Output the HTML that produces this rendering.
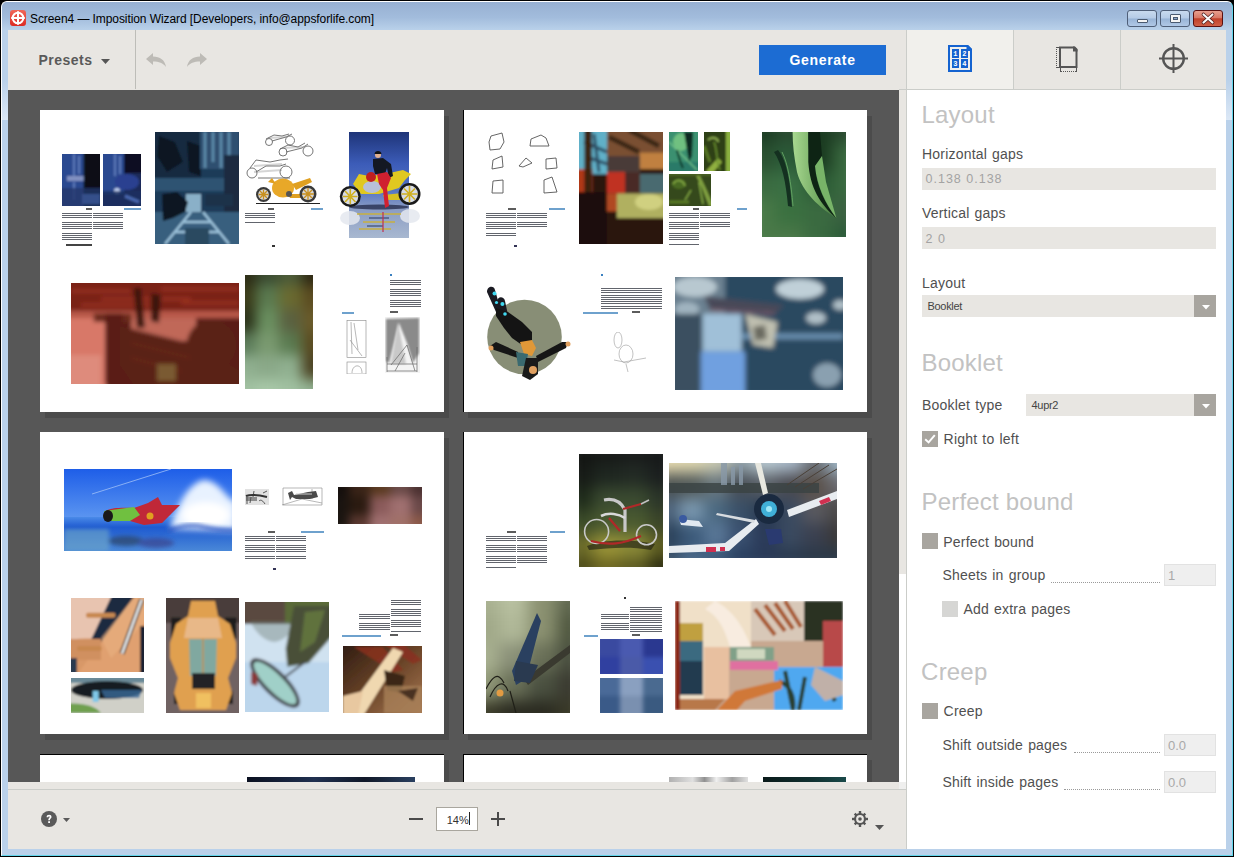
<!DOCTYPE html>
<html><head><meta charset="utf-8">
<style>
*{box-sizing:border-box;margin:0;padding:0}
html,body{width:1234px;height:857px;overflow:hidden;background:#000;font-family:"Liberation Sans",sans-serif}
.a{position:absolute}
#win{position:absolute;left:0;top:0;width:1234px;height:857px;background:#000}
#frame{position:absolute;left:1px;top:1px;width:1232px;height:855px;border-radius:6px 6px 0 0;background:#bad1ea;border-left:1px solid #fff;border-top:1px solid #fff;border-right:1px solid #62d6ec;border-bottom:1px solid #62d6ec}
#titlebar{position:absolute;left:2px;top:2px;width:1230px;height:28px;border-radius:5px 5px 0 0;background:linear-gradient(#97b0d2,#a2bcdc 55%,#b9d1ea)}
#title{left:30px;top:12px;font-size:12px;color:#000;white-space:nowrap;letter-spacing:-0.08px}
.wbtn{position:absolute;top:10px;height:17px;border:1px solid #4f5f78;border-radius:3px;background:linear-gradient(#c8daee,#b5cbe6 48%,#98b4d6 52%,#b0c8e6)}
#client{position:absolute;left:8px;top:30px;width:1218px;height:819px;background:#e8e6e2;overflow:hidden}
.lbl{position:absolute;font-size:14px;color:#505050;white-space:nowrap;letter-spacing:0.2px;word-spacing:1px}
.hd{position:absolute;font-size:24px;color:#c2c2c2;white-space:nowrap;letter-spacing:0.2px;margin:-1.5px 0 0 -1.5px}
.inp{position:absolute;background:#e8e6e2}
.cb{position:absolute;width:16px;height:16px;background:#a8a59f}
.dots{position:absolute;height:1px;border-bottom:1px dotted #9a9a9a}
.sm{position:absolute;width:52px;height:22px;background:#efefef;border:1px solid #e2e2e2;font-size:13px;color:#a9a9a9;padding:3px 0 0 3px}
.pg{position:absolute;width:404px;height:302px;background:#fff;box-shadow:5px 6px 0 #4b4b4b}
.im{position:absolute;overflow:hidden}
.gr{position:absolute;display:grid}
.gr i{display:block}
.tx{position:absolute;opacity:.8;background:repeating-linear-gradient(#3a3e48 0 0.9px,#fff 0.9px 2.2px)}
</style></head><body>
<div id="win">
 <div id="frame"></div>
 <div id="titlebar"></div>
 <div class="a" style="left:2px;top:80px;width:6px;height:40px;background:linear-gradient(#bad1ea,#dce8f6)"></div>
 <div class="a" style="left:1226px;top:80px;width:6px;height:40px;background:linear-gradient(#bad1ea,#dce8f6)"></div>
 <div class="a" style="left:10px;top:10px;width:16px;height:16px;border-radius:3px;background:linear-gradient(#f0685a,#dc2a22)">
  <svg width="16" height="16" viewBox="0 0 16 16" style="position:absolute;left:0;top:0"><circle cx="8" cy="8" r="5.3" fill="none" stroke="#fff" stroke-width="2"/><path d="M8 1.2V14.8M1.2 8H14.8" stroke="#fff" stroke-width="2"/></svg>
 </div>
 <div id="title" class="a">Screen4 — Imposition Wizard [Developers, info@appsforlife.com]</div>
 <div class="wbtn" style="left:1127px;width:30px"><div class="a" style="left:9px;top:8px;width:11px;height:4px;background:#f4f4f4;border:1px solid #4a5a70;border-radius:1px"></div></div>
 <div class="wbtn" style="left:1160px;width:30px"><div class="a" style="left:9px;top:3px;width:11px;height:9px;background:#f4f4f4;border:1px solid #4a5a70;border-radius:1px"><div class="a" style="left:2px;top:2px;width:5px;height:3px;background:#8aa6c8;border:1px solid #4a5a70"></div></div></div>
 <div class="wbtn" style="left:1193px;width:30px;border-color:#5a1010;background:linear-gradient(#e8a090,#d87866 45%,#c0402a 52%,#d06048)">
  <svg width="30" height="17" style="position:absolute;left:-1px;top:-1px"><path d="M10.5 4.5L19.5 12.5M19.5 4.5L10.5 12.5" stroke="#4a1a1a" stroke-width="3.6" stroke-linecap="round"/><path d="M10.5 4.5L19.5 12.5M19.5 4.5L10.5 12.5" stroke="#fafafa" stroke-width="2.2" stroke-linecap="round"/></svg>
 </div>

 <div id="client">
  <!-- toolbar -->
  <div class="a" style="left:0;top:0;width:898px;height:60px;background:#e8e6e2"></div>
  <div class="a" style="left:30.4px;top:21.5px;font-size:14px;font-weight:bold;color:#5a5a5a;letter-spacing:0.5px">Presets</div>
  <svg class="a" style="left:93px;top:29px" width="9" height="5"><path d="M0 0H9L4.5 5Z" fill="#555"/></svg>
  <div class="a" style="left:127px;top:0;width:1px;height:59px;background:#bdbdb8"></div>
  <svg class="a" style="left:138px;top:23px" width="21" height="15" viewBox="0 0 21 15"><path d="M0 6L7 0V3.5C14 3.5 19 7 20 14C17 10 13 8.5 7 8.5V12Z" fill="#bdbbb6"/></svg>
  <svg class="a" style="left:178px;top:23px" width="21" height="15" viewBox="0 0 21 15"><path d="M21 6L14 0V3.5C7 3.5 2 7 1 14C4 10 8 8.5 14 8.5V12Z" fill="#bdbbb6"/></svg>
  <div class="a" style="left:751px;top:15px;width:127px;height:30px;background:#1c6cd3"></div>
  <div class="a" style="left:781.4px;top:22.4px;font-size:14px;font-weight:bold;color:#fff;letter-spacing:0.7px">Generate</div>

  <!-- canvas -->
  <div id="canvas" class="a" style="left:0;top:60px;width:891px;height:692px;background:#575757;overflow:hidden">
<div class="pg" style="left:32px;top:20px"></div>
<div class="pg" style="left:455px;top:20px"></div>
<div class="a" style="left:455px;top:20px;width:1px;height:302px;background:#000"></div>
<div class="pg" style="left:32px;top:342px"></div>
<div class="pg" style="left:455px;top:342px"></div>
<div class="a" style="left:455px;top:342px;width:1px;height:302px;background:#000"></div>
<div class="pg" style="left:32px;top:664px"></div>
<div class="a" style="left:32px;top:664px;width:404px;height:1px;background:#000"></div>
<div class="pg" style="left:455px;top:664px"></div>
<div class="a" style="left:455px;top:664px;width:1px;height:302px;background:#000"></div>
<div class="a" style="left:455px;top:664px;width:404px;height:1px;background:#000"></div>
<svg class="a" style="left:54px;top:64px" width="38" height="52" viewBox="0 0 38 52"><defs><filter id="f14" x="-20%" y="-20%" width="140%" height="140%"><feGaussianBlur stdDeviation="0.9"/></filter></defs><g filter="url(#f14)"><rect x="-3" y="-3" width="44" height="58" fill="#080c18"/>
<path d="M-3 -3H21.6V55H-3Z" fill="#2a4a90"/><path d="M12 0V22M17 2V20M12 28V46" stroke="#5a78b8" stroke-width="2"/>
<path d="M5 22H21.6V27H5Z" fill="#8090c0"/><path d="M-3 34H40V55H-3Z" fill="#24366a" opacity=".8"/><path d="M20 40H38V50H20Z" fill="#34508a"/></g></svg>
<svg class="a" style="left:95px;top:64px" width="38" height="52" viewBox="0 0 38 52"><defs><filter id="f15" x="-20%" y="-20%" width="140%" height="140%"><feGaussianBlur stdDeviation="0.9"/></filter></defs><g filter="url(#f15)"><rect x="-3" y="-3" width="44" height="58" fill="#1a2a58"/>
<path d="M-3 -3H21V40H-3Z" fill="#2a4a90"/><path d="M12 0V22M17 2V20" stroke="#5a78b8" stroke-width="2"/><path d="M21 -3H41V19H21Z" fill="#0a1020"/>
<ellipse cx="24" cy="28" rx="12" ry="8" fill="#2a4090"/><circle cx="14" cy="37" r="3" fill="#c0d0f0"/><path d="M-3 37H41V55H-3Z" fill="#1a3060" opacity=".8"/><path d="M22 42L36 48" stroke="#4a68b0" stroke-width="3"/></g></svg>
<svg class="a" style="left:147px;top:42px" width="84" height="112" viewBox="0 0 84 112"><defs><filter id="f13" x="-20%" y="-20%" width="140%" height="140%"><feGaussianBlur stdDeviation="1.3"/></filter></defs><g filter="url(#f13)"><rect x="-4" y="-4" width="92" height="120" fill="#1e3a58"/>
<path d="M-4 -4H46V59H-4Z" fill="#162a40"/><path d="M4 4L20 10L28 30L12 40L2 24Z" fill="#0c1824"/><path d="M32 9L46 14L46 44L34 40Z" fill="#0a1420"/>
<path d="M45 -4H84V37H45Z" fill="#2e5070"/><path d="M50 0V36M58 0V30M66 0V36M74 0V30" stroke="#5a88a8" stroke-width="3"/>
<path d="M-4 46H88V59H-4Z" fill="#2e5272"/><path d="M69 23H88V80H69Z" fill="#1a2a40"/>
<path d="M-4 80H88V116H-4Z" fill="#385e7e"/><path d="M10 112L36 80M74 112L48 80M20 100H64M28 90H56" stroke="#9ac0d8" stroke-width="2.5"/><path d="M30 96H54V116H30Z" fill="#2a4a60"/>
<path d="M31 62H46V80H31Z" fill="#8ab0c8"/><path d="M7 62L22 60L33 70L30 80L18 86L8 89Z" fill="#0a1420"/><path d="M50 62H78V74H50Z" fill="#1a3048"/></g></svg>
<div class="tx" style="left:54px;top:123px;width:30px;height:30px"></div>
<div class="a" style="left:58px;top:154px;width:26px;height:2px;background:#444"></div>
<div class="tx" style="left:85px;top:123px;width:30px;height:19px"></div>
<div class="a" style="left:78px;top:118px;width:6px;height:2px;background:#333;opacity:.8"></div>
<div class="a" style="left:116px;top:118px;width:17px;height:2px;background:#4a8ac0;opacity:.8"></div>
<svg class="a" style="left:234px;top:38px" width="84" height="82" viewBox="0 0 84 82"><g fill="none" stroke="#666" stroke-width="0.9">
<circle cx="27" cy="14" r="3.5"/><circle cx="48" cy="12.5" r="4.5"/><path d="M24 11L32 7L40 8L47 6M30 13L44 9L50 6"/>
<circle cx="41" cy="24" r="4"/><circle cx="66" cy="23" r="5"/><path d="M38 21L46 17L56 19L63 15M44 24L60 20L66 16"/>
<circle cx="10" cy="45" r="5"/><circle cx="44" cy="44" r="6"/><path d="M8 40L14 32L28 34L38 32L46 31M14 44L24 38L38 38L44 36M16 50H48"/></g>
<g stroke="#888" stroke-width="2" opacity=".35" fill="none"><path d="M26 10L44 9M40 20L62 19M12 38L40 36M12 44L40 42"/></g>
<path d="M14 75.5H78" stroke="#222" stroke-width="1.2"/>
<ellipse cx="41" cy="60" rx="11" ry="9.5" fill="#e8a828"/><path d="M50 56L68 50L70 54L54 62Z" fill="#e0a020"/><path d="M46 66L62 66L60 70L48 70Z" fill="#e0a020"/><path d="M26 54L30 50L34 56Z" fill="#e0a020"/>
<circle cx="21.5" cy="66.5" r="7.5" fill="#3a3a3a"/><circle cx="21.5" cy="66.5" r="5.3" fill="#d8d8d8"/><path d="M21.5 61.5V71.5M16.5 66.5H26.5M18 63L25 70M25 63L18 70" stroke="#c89020" stroke-width="1.3"/>
<circle cx="66" cy="66" r="8.5" fill="#3a3a3a"/><circle cx="66" cy="66" r="6" fill="#d8d8d8"/><path d="M66 60V72M60 66H72M62 62L70 70M70 62L62 70" stroke="#c89020" stroke-width="1.3"/>
<circle cx="47" cy="66" r="3" fill="#555"/></svg>
<div class="tx" style="left:237px;top:123px;width:30px;height:10px"></div>
<div class="a" style="left:303px;top:118px;width:12px;height:2px;background:#4a8ac0;opacity:.8"></div>
<div class="a" style="left:260px;top:118px;width:6px;height:2px;background:#333;opacity:.8"></div>
<div class="a" style="left:264px;top:155px;width:3px;height:2px;background:#333"></div>
<svg class="a" style="left:331px;top:42px" width="84" height="106" viewBox="0 0 84 106"><defs><linearGradient id="wb" x1="0" y1="0" x2="0" y2="1"><stop offset="0" stop-color="#1e3478"/><stop offset=".3" stop-color="#3c5cb8"/><stop offset=".55" stop-color="#5474c4"/><stop offset=".72" stop-color="#8a9cc4"/><stop offset="1" stop-color="#a8b8d0"/></linearGradient></defs>
<rect x="10" y="0" width="60" height="106" fill="url(#wb)"/>
<ellipse cx="11" cy="86" rx="10" ry="7" fill="#e4e8ee" opacity=".85"/><ellipse cx="71" cy="84" rx="10" ry="7" fill="#e4e8ee" opacity=".85"/>
<path d="M18 82H62M24 90H56M20 97H52" stroke="#c8b040" stroke-width="2" opacity=".75"/><path d="M30 86H50M28 94H44" stroke="#3a4a70" stroke-width="2" opacity=".6"/><path d="M44 80V100" stroke="#c03050" stroke-width="2" opacity=".6"/>
<ellipse cx="40" cy="75" rx="30" ry="2.5" fill="#1a2040" opacity=".7"/>
<path d="M14 52L20 42L30 44L46 42L64 38L72 42L66 48L60 56L40 62L22 62Z" fill="#e0c820"/>
<ellipse cx="33" cy="55" rx="9" ry="6" fill="#b8c0d8"/><path d="M44 63L64 61L62 68L46 68Z" fill="#d8c020"/>
<circle cx="11.3" cy="64.5" r="10.5" fill="#1a1a1a"/><circle cx="11.3" cy="64.5" r="8" fill="#d8dce4"/><path d="M11.3 57V72M4 64.5H18.5M6 59L16.5 70M16.5 59L6 70" stroke="#d0b020" stroke-width="1.6"/>
<circle cx="70.5" cy="62" r="11" fill="#1a1a1a"/><circle cx="70.5" cy="62" r="8.4" fill="#d8dce4"/><path d="M70.5 54V70M62.5 62H78.5M65 56.5L76 67.5M76 56.5L65 67.5" stroke="#d0b020" stroke-width="1.6"/>
<path d="M34 27L44 26L52 32L54 44L50 46L48 36L46 42L36 42L34 34Z" fill="#141822"/><circle cx="39" cy="23" r="3" fill="#e0b090"/><path d="M35.5 22C35.5 18 42.5 18 42.5 22Z" fill="#111"/>
<path d="M38 42L48 40L52 46L48 56L50 74L46 76L44 58L40 52Z" fill="#d02030"/><circle cx="32" cy="45" r="5" fill="#c02020"/></svg>
<svg class="a" style="left:63px;top:193px" width="168" height="101" viewBox="0 0 168 101"><defs><filter id="f11" x="-20%" y="-20%" width="140%" height="140%"><feGaussianBlur stdDeviation="2"/></filter></defs><g filter="url(#f11)">
<rect x="-5" y="-5" width="178" height="111" fill="#5a1c14"/>
<rect x="-5" y="-5" width="178" height="33" fill="#7a2418"/><path d="M0 8H60M30 16H120M90 6H168M10 22H80M110 20H168" stroke="#a83a28" stroke-width="3" opacity=".7"/>
<rect x="-5" y="28" width="178" height="7" fill="#b85848"/><path d="M60 35H125V58H60Z" fill="#c06858"/>
<path d="M-5 35H35V106H-5Z" fill="#d87868"/><path d="M-5 72H30V106H-5Z" fill="#e09080" opacity=".8"/>
<path d="M22.7 30.5H60.6V39H22.7Z" fill="#6a2a1c"/><path d="M34 30.5H52V100H34Z" fill="#5a1a14"/>
<path d="M62.7 5L70 5L74 45L66 45ZM80 10L90 12L88 40L80 38Z" fill="#3a1410"/>
<path d="M49 43L126 62L168 87L168 106L65 106L49 83Z" fill="#5a2018"/><path d="M60 60L120 75M60 75L110 88" stroke="#6a2a1c" stroke-width="2"/>
<circle cx="140.7" cy="62" r="25" fill="#5a2014"/><path d="M86 81H105V98H86Z" fill="#7a5a30"/></g></svg>
<div class="im" style="left:237px;top:185px;width:68px;height:114px"><div class="gr" style="left:-12.92px;top:-12.92px;right:-12.92px;bottom:-12.92px;grid-template-columns:repeat(4,1fr);grid-template-rows:repeat(6,1fr);filter:blur(6.5px)"><i style="background:#2a2a14"></i><i style="background:#3a4a30"></i><i style="background:#4a5a38"></i><i style="background:#2a2410"></i><i style="background:#3a3a18"></i><i style="background:#5a7a50"></i><i style="background:#6a6a30"></i><i style="background:#5a4a20"></i><i style="background:#2a3018"></i><i style="background:#6a9060"></i><i style="background:#5a6040"></i><i style="background:#6a5a28"></i><i style="background:#5a7a58"></i><i style="background:#7a9a70"></i><i style="background:#5a7a50"></i><i style="background:#5a4a20"></i><i style="background:#90b090"></i><i style="background:#8aa888"></i><i style="background:#90b090"></i><i style="background:#4a4020"></i><i style="background:#a0c0a0"></i><i style="background:#a8c8a8"></i><i style="background:#a0c0a0"></i><i style="background:#90b090"></i></div></div>
<div class="a" style="left:382px;top:184px;width:2px;height:2px;background:#3a80c0"></div>
<div class="tx" style="left:382px;top:190px;width:31px;height:29px"></div>
<div class="a" style="left:334px;top:222px;width:12px;height:2px;background:#4a8ac0;opacity:.8"></div>
<div class="a" style="left:382px;top:221px;width:8px;height:2px;background:#333;opacity:.8"></div>
<svg class="a" style="left:338px;top:230px" width="21" height="54" viewBox="0 0 21 54"><g fill="none" stroke="#888" stroke-width="0.6"><rect x="1" y="0.5" width="19" height="37"/><path d="M5 2L6 34M8 3L12 30M4 20L16 36"/><rect x="1" y="42" width="19" height="12"/><path d="M6 53C6 44 16 43 16 53"/></g></svg>
<svg class="a" style="left:377px;top:227px" width="35" height="56" viewBox="0 0 35 56"><defs><filter id="f12" x="-20%" y="-20%" width="140%" height="140%"><feGaussianBlur stdDeviation="1.3"/></filter></defs><rect width="35" height="56" fill="#f4f4f4"/>
<path d="M1 2L34 1L34 36L28 46L22 26L14 6L8 30L4 46L1 44Z" fill="#8a8a8a" filter="url(#f12)"/><path d="M13 5L6 47H21Z" fill="#c8c8c8" filter="url(#f12)"/>
<g stroke="#666" stroke-width=".7" fill="none"><path d="M2 54H32M2 40V55M32 30V55M6 48L22 28L30 54M10 54L20 36M2 47H32"/></g></svg>
<svg class="a" style="left:478px;top:42px" width="80" height="73" viewBox="0 0 80 73"><g fill="none" stroke="#555" stroke-width="0.9">
<path d="M5 4L16 1L18 10L14 17L4 18L3 10Z"/><path d="M45 7L55 3L60 6L63 14H44Z"/><path d="M7 28L16 24L17 35L6 37Z"/>
<path d="M33 34L40 26L46 31L37 35Z"/><path d="M60 27L70 26L71 36L60 37Z"/><path d="M7 49L17 48L17 61L6 61Z"/><path d="M58 48L66 45L71 60L58 61Z"/></g></svg>
<div class="tx" style="left:478px;top:123px;width:30px;height:23px"></div>
<div class="tx" style="left:509px;top:123px;width:30px;height:14px"></div>
<div class="a" style="left:500px;top:118px;width:8px;height:2px;background:#333;opacity:.8"></div>
<div class="a" style="left:541px;top:118px;width:16px;height:2px;background:#4a8ac0;opacity:.8"></div>
<div class="a" style="left:506px;top:155px;width:3px;height:2px;background:#335"></div>
<svg class="a" style="left:571px;top:42px" width="84" height="112" viewBox="0 0 84 112"><defs><filter id="f21" x="-20%" y="-20%" width="140%" height="140%"><feGaussianBlur stdDeviation="1.8"/></filter></defs><g filter="url(#f21)"><rect x="-5" y="-5" width="94" height="122" fill="#2a1810"/><rect x="-5" y="-5" width="34" height="47" fill="#60b0c8"/><path d="M5 10L28 20M8 25L28 32M15 2L20 40" stroke="#2a4a60" stroke-width="3"/><path d="M28 -5H89V24H28Z" fill="#7a5030"/><path d="M30 5L60 20M50 -2L80 14" stroke="#3a2818" stroke-width="5"/><path d="M61 20.7H89V37H61Z" fill="#c08040"/><path d="M28 24H61V40H28Z" fill="#4a3a38"/><rect x="-5" y="37" width="18.5" height="23" fill="#b03818"/><rect x="28" y="40" width="18" height="21.5" fill="#c03020"/><rect x="46" y="40" width="15" height="21.5" fill="#4a2a28"/><rect x="61" y="42" width="28" height="19.5" fill="#4a6a70"/><rect x="5.4" y="-5" width="7.3" height="65" fill="#3a2010"/><path d="M38 61.5H89V86H38Z" fill="#b0b060"/><ellipse cx="70" cy="70" rx="14" ry="8" fill="#d0d080"/><path d="M13.5 61.5H38V79.5H13.5Z" fill="#b04a20"/><path d="M-5 60H28V117H-5Z" fill="#1a1008"/><path d="M28 86H89V117H28Z" fill="#2a1810"/></g></svg>
<svg class="a" style="left:661px;top:42px" width="29" height="39" viewBox="0 0 29 39"><defs><filter id="f23" x="-20%" y="-20%" width="140%" height="140%"><feGaussianBlur stdDeviation="0.9"/></filter></defs><g filter="url(#f23)"><rect x="-3" y="-3" width="35" height="45" fill="#3a9070"/><ellipse cx="12" cy="10" rx="8" ry="9" fill="#70c080"/><rect x="-3" y="30" width="35" height="12" fill="#2a7a68"/>
<path d="M0 10L28 38" stroke="#70c088" stroke-width="1.5"/><path d="M8 18C10 26 12 32 14 36" stroke="#0a3020" stroke-width="1.8" fill="none"/>
<path d="M15 0L24 0L23 24L20 30Z" fill="#0a2a20"/></g></svg>
<svg class="a" style="left:696px;top:42px" width="26" height="39" viewBox="0 0 26 39"><defs><filter id="f24" x="-20%" y="-20%" width="140%" height="140%"><feGaussianBlur stdDeviation="0.8"/></filter></defs><g filter="url(#f24)"><rect x="-3" y="-3" width="32" height="45" fill="#2e4012"/>
<rect x="22" y="-3" width="6" height="45" fill="#8ab040"/><path d="M2 39L14 26L18 30L8 42Z" fill="#90b040"/><path d="M4 8C8 4 14 6 14 10" stroke="#8aaa50" stroke-width="2" fill="none"/>
<path d="M10 10C14 20 12 30 16 38" stroke="#6a9030" stroke-width="1.5" fill="none"/><path d="M0 14L6 30" stroke="#5a7a28" stroke-width="3"/></g></svg>
<svg class="a" style="left:661px;top:84px" width="42" height="32" viewBox="0 0 42 32"><defs><filter id="f25" x="-20%" y="-20%" width="140%" height="140%"><feGaussianBlur stdDeviation="0.8"/></filter></defs><g filter="url(#f25)"><rect x="-3" y="-3" width="48" height="38" fill="#34481a"/>
<path d="M26 0C32 10 36 22 40 32L44 32C40 20 34 8 30 0Z" fill="#80a040"/><ellipse cx="10" cy="10" rx="7" ry="5" fill="#4a6a20"/><path d="M4 10C8 4 14 6 16 12M16 26L22 16M30 8L34 30" stroke="#8ab048" stroke-width="1.4" fill="none"/>
<rect x="-3" y="-3" width="48" height="5" fill="#4a6020"/><path d="M0 28H20" stroke="#5a7a28" stroke-width="3"/></g></svg>
<div class="tx" style="left:661px;top:123px;width:30px;height:32px"></div>
<div class="tx" style="left:692px;top:123px;width:30px;height:15px"></div>
<div class="a" style="left:729px;top:118px;width:10px;height:2px;background:#4a8ac0;opacity:.8"></div>
<div class="a" style="left:685px;top:118px;width:6px;height:2px;background:#333;opacity:.8"></div>
<div class="im" style="left:754px;top:42px;width:84px;height:105px"><div class="gr" style="left:-15.96px;top:-15.96px;right:-15.96px;bottom:-15.96px;grid-template-columns:repeat(4,1fr);grid-template-rows:repeat(5,1fr);filter:blur(8.0px)"><i style="background:#1a3a22"></i><i style="background:#2a4a30"></i><i style="background:#1a3a20"></i><i style="background:#2a4a30"></i><i style="background:#2a5030"></i><i style="background:#2a5a38"></i><i style="background:#1a3a20"></i><i style="background:#3a6a40"></i><i style="background:#3a6a40"></i><i style="background:#3a7044"></i><i style="background:#2a5a34"></i><i style="background:#3a6a40"></i><i style="background:#4a7a48"></i><i style="background:#3a7040"></i><i style="background:#3a6a40"></i><i style="background:#3a6040"></i><i style="background:#4a7a48"></i><i style="background:#4a7848"></i><i style="background:#3a6a40"></i><i style="background:#2a5a38"></i></div></div>
<svg class="a" style="left:754px;top:42px" width="84" height="105" viewBox="0 0 84 105"><defs><linearGradient id="hg" x1="0" y1="0" x2="1" y2="0"><stop offset="0" stop-color="#a8d890"/><stop offset=".6" stop-color="#70a860"/><stop offset="1" stop-color="#3a6a38"/></linearGradient></defs>
<path d="M30.6 0L46.3 0C46 30 52 55 74.4 86.2C58 76 40 60 35 40C32 25 30.6 12 30.6 0Z" fill="url(#hg)"/>
<path d="M46.3 0L58 0L60 24L53 34C54 52 62 70 74.4 86.2C58 72 48 56 46.3 30Z" fill="#0e2414"/>
<path d="M53 34L60 24L64 50L74.4 86.2C64 72 55 55 53 34Z" fill="#78b468"/>
<path d="M16 18C24 28 28 45 30 75L26 74C24 50 20 32 12 20Z" fill="#143020"/><path d="M20 20C26 32 29 50 31 74" stroke="#60a060" stroke-width="1" fill="none"/></svg>
<svg class="a" style="left:474px;top:192px" width="94" height="104" viewBox="0 0 94 104"><circle cx="42.5" cy="55" r="37.3" fill="#888e76"/>
<path d="M5 10C5 4 12 3 13 8L17 22L20 27L14 30Z" fill="#1a1a22"/><path d="M15 20C15 14 22 14 23 19L26 33L20 36Z" fill="#1a1a22"/>
<path d="M14 26L26 30L40 40L50 50L50 60L40 63L30 56L22 46L14 34Z" fill="#141414"/>
<path d="M38 60L50 58L54 66L50 74L42 72Z" fill="#e09838"/>
<path d="M8 64L14 60L36 70L36 76L12 68Z" fill="#161616"/><path d="M54 74L80 60L86 60L84 66L56 80Z" fill="#161616"/>
<circle cx="9" cy="66" r="2.5" fill="#e0a060"/><circle cx="86" cy="62" r="2.5" fill="#e0a060"/>
<path d="M34 70L46 72L44 84L36 84Z" fill="#3a6a70"/>
<path d="M44 76L56 76L56 92L48 98L40 94Z" fill="#1a1a1a"/><circle cx="51" cy="88" r="4" fill="#e0a060"/>
<circle cx="12.5" cy="11.5" r="2" fill="#40d8f0"/><circle cx="20.4" cy="22" r="2" fill="#40d8f0"/><circle cx="23" cy="32" r="1.8" fill="#40d8f0"/><circle cx="14.5" cy="20.5" r="1.6" fill="#40d8f0"/></svg>
<div class="a" style="left:593px;top:184px;width:2px;height:2px;background:#3a80c0"></div>
<div class="tx" style="left:593px;top:198px;width:61px;height:21px"></div>
<div class="a" style="left:575px;top:222px;width:35px;height:2px;background:#4a8ac0;opacity:.8"></div>
<div class="a" style="left:624px;top:221px;width:8px;height:2px;background:#333;opacity:.8"></div>
<svg class="a" style="left:602px;top:242px" width="38" height="42" viewBox="0 0 38 42"><g fill="none" stroke="#999" stroke-width="0.6"><ellipse cx="8" cy="8" rx="4" ry="8"/><ellipse cx="16" cy="22" rx="7" ry="9"/><path d="M4 28L14 30L36 26M16 32L18 40"/></g></svg>
<svg class="a" style="left:667px;top:187px" width="168" height="113" viewBox="0 0 168 113"><defs><filter id="f22" x="-20%" y="-20%" width="140%" height="140%"><feGaussianBlur stdDeviation="2.5"/></filter></defs><g filter="url(#f22)"><rect x="-5" y="-5" width="178" height="123" fill="#2a4860"/><path d="M-5 -5H50V40H-5Z" fill="#6a8090"/><ellipse cx="20" cy="10" rx="22" ry="10" fill="#b8c8d0"/><ellipse cx="12" cy="32" rx="12" ry="7" fill="#a0b4c0"/><ellipse cx="125" cy="12" rx="24" ry="10" fill="#c0d0d8"/><ellipse cx="141" cy="41" rx="10" ry="6" fill="#b0c0c8"/><ellipse cx="165" cy="28" rx="7" ry="5" fill="#b0c0c8"/><path d="M-5 37H27.5V118H-5Z" fill="#3a5060"/><path d="M27.5 37H66.7V74.5H27.5Z" fill="#a0c0d8"/><path d="M26 74.5H70V118H26Z" fill="#70a0e0"/><path d="M66.7 56.5H168V62H66.7Z" fill="#6a90b0"/><path d="M29 19L109 28L100 37L35 33Z" fill="#4a4a58"/><path d="M35 33L100 37" stroke="#b07080" stroke-width="1"/><path d="M70 37L102.6 45L98 71L78 68Z" fill="#c0c0b0"/><path d="M78 50L90 48L92 62L80 64Z" fill="#6a6a60"/><ellipse cx="152" cy="98" rx="14" ry="12" fill="#8aa0b0"/></g></svg>
<svg class="a" style="left:56px;top:379px" width="168" height="82" viewBox="0 0 168 82"><defs><linearGradient id="sk" x1="0" y1="0" x2="0" y2="1"><stop offset="0" stop-color="#1e5ee8"/><stop offset="1" stop-color="#5a94f0"/></linearGradient><linearGradient id="wt" x1="0" y1="0" x2="0" y2="1"><stop offset="0" stop-color="#4a8ae8"/><stop offset=".3" stop-color="#1e5ad0"/><stop offset="1" stop-color="#4a88d8"/></linearGradient><filter id="bl1" x="-50%" y="-50%" width="200%" height="200%"><feGaussianBlur stdDeviation="3"/></filter><filter id="bl2" x="-50%" y="-50%" width="200%" height="200%"><feGaussianBlur stdDeviation="2"/></filter></defs>
<rect width="168" height="48" fill="url(#sk)"/><rect y="48" width="168" height="34" fill="url(#wt)"/>
<path d="M28 25L107 0" stroke="#a0c0f8" stroke-width="0.8"/>
<g filter="url(#bl1)"><path d="M106 60C112 40 122 18 136 12C146 8 156 18 164 28L172 34V62Z" fill="#e8f2ff"/><ellipse cx="142" cy="46" rx="24" ry="13" fill="#fff"/></g>
<path d="M104 62C116 57 128 55 140 58C150 60 160 62 170 61" stroke="#2050c0" stroke-width="3" fill="none" filter="url(#bl2)"/>
<g filter="url(#bl2)" opacity=".6"><rect x="0" y="60" width="45" height="22" fill="#70a8c8"/><ellipse cx="62" cy="72" rx="18" ry="5" fill="#2a3a50"/><ellipse cx="92" cy="74" rx="18" ry="5" fill="#3a3a80"/></g>
<path d="M40 44C42 40 50 38 70 39L84 34L94 28L98 36L116 36L108 44L98 54L80 56L66 52L44 52Z" fill="#c02838"/>
<path d="M40 42L70 38L76 46L66 52L44 52Z" fill="#70c040"/><ellipse cx="44" cy="47" rx="5" ry="6" fill="#1a1a1a"/><circle cx="86" cy="47" r="3.5" fill="#e0a020"/></svg>
<svg class="a" style="left:237px;top:399px" width="24" height="16" viewBox="0 0 24 16"><rect width="24" height="16" fill="#e2e2e2"/><g stroke="#333" fill="none"><path d="M1 7C6 5 14 6 22 8" stroke-width="2"/><path d="M2 8V15M6 8L5 14M9 2L8 8M14 12C16 10 18 12 20 15M18 4L22 2" stroke-width=".8"/></g><path d="M1 8H12V12H1Z" fill="#555" opacity=".6"/></svg>
<svg class="a" style="left:274px;top:397px" width="41" height="19" viewBox="0 0 41 19"><g stroke="#888" fill="none" stroke-width=".6"><path d="M1 1H40V18H1ZM0 18L20 12L40 16M30 2V12"/></g><path d="M6 6L10 4L12 8L26 5L34 4L36 10L28 12L14 12L10 10L8 13Z" fill="#4a4a4a"/><path d="M14 7H30" stroke="#ccc" stroke-width="1"/></svg>
<div class="im" style="left:330px;top:397px;width:84px;height:37px"><div class="gr" style="left:-9.373333333333333px;top:-9.373333333333333px;right:-9.373333333333333px;bottom:-9.373333333333333px;grid-template-columns:repeat(5,1fr);grid-template-rows:repeat(3,1fr);filter:blur(4.7px)"><i style="background:#140e0c"></i><i style="background:#3a2418"></i><i style="background:#5a3a20"></i><i style="background:#6a4a48"></i><i style="background:#4a3030"></i><i style="background:#1a1410"></i><i style="background:#2a1a10"></i><i style="background:#8a5a5a"></i><i style="background:#a07070"></i><i style="background:#6a4848"></i><i style="background:#1a1410"></i><i style="background:#5a3830"></i><i style="background:#a07070"></i><i style="background:#a07068"></i><i style="background:#8a5848"></i></div></div>
<div class="tx" style="left:237px;top:446px;width:30px;height:24px"></div>
<div class="tx" style="left:268px;top:446px;width:30px;height:23px"></div>
<div class="a" style="left:293px;top:441px;width:23px;height:2px;background:#4a8ac0;opacity:.8"></div>
<div class="a" style="left:260px;top:441px;width:7px;height:2px;background:#333;opacity:.8"></div>
<div class="a" style="left:265px;top:478px;width:3px;height:2px;background:#335"></div>
<svg class="a" style="left:63px;top:508px" width="73" height="74" viewBox="0 0 73 74"><defs><filter id="f31" x="-20%" y="-20%" width="140%" height="140%"><feGaussianBlur stdDeviation="0.8"/></filter></defs><g filter="url(#f31)"><rect x="-5" y="-5" width="83" height="84" fill="#d89868"/><path d="M-5 -5H43V42C30 40 10 40 -5 42Z" fill="#e8c4b0"/><path d="M42 -5H70L31.5 46L20 42Z" fill="#1e2a40"/><path d="M5 78L66 -5H78V78Z" fill="#e0a070"/><path d="M30 40L66 -5H78V20L40 60Z" fill="#e8b080" opacity=".6"/><path d="M-5 41H30V62H-5Z" fill="#d09060"/><path d="M-5 60H6V78H-5Z" fill="#2a3a50"/><path d="M69 28H78V78H69Z" fill="#1a2030"/><path d="M70.7 1.7L51 55.6" stroke="#303030" stroke-width="5"/><path d="M70.7 1.7L51 55.6" stroke="#f4f4f4" stroke-width="2.4"/><rect x="15" y="14.8" width="29.5" height="5" rx="2" fill="#c88850"/><rect x="6" y="48" width="24.7" height="5" rx="2" fill="#c88850"/></g></svg>
<svg class="a" style="left:63px;top:588px" width="73" height="35" viewBox="0 0 73 35"><defs><filter id="f32" x="-20%" y="-20%" width="140%" height="140%"><feGaussianBlur stdDeviation="0.8"/></filter></defs><g filter="url(#f32)"><rect x="-5" y="-5" width="83" height="45" fill="#d0d0c8"/><rect x="-5" y="-5" width="83" height="10" fill="#6a8a98"/><ellipse cx="36" cy="12" rx="36" ry="9" fill="#151a20"/><path d="M30 12H71L68 20H34Z" fill="#3a6a98" opacity=".8"/><path d="M-5 26C10 24 25 28 30 35H-5Z" fill="#70a050"/><rect x="21.7" y="13" width="6" height="11" fill="#80c8e8"/></g></svg>
<svg class="a" style="left:158px;top:508px" width="73" height="115" viewBox="0 0 73 115"><defs><filter id="f33" x="-20%" y="-20%" width="140%" height="140%"><feGaussianBlur stdDeviation="0.8"/></filter></defs><g filter="url(#f33)"><rect x="-5" y="-5" width="83" height="125" fill="#706262"/><rect x="-5" y="-5" width="83" height="30" fill="#4a3c3a"/><rect x="5" y="19.7" width="10" height="21" fill="#1a1a1a"/><rect x="59" y="19.7" width="11.5" height="21" fill="#1a1a1a"/><rect x="8" y="93" width="12" height="13" fill="#1a1a1a"/><rect x="56" y="93" width="11" height="13" fill="#1a1a1a"/><path d="M25 3L49 3L52 18L64 26L70 45L70 60L62 80L66 95L60 112L14 112L8 95L12 80L4 60L4 45L10 26L22 18Z" fill="#e0a050"/><path d="M22 20L52 20L56 40L18 40Z" fill="#e8b888"/><path d="M23 41L51 41L50 78L24 78Z" fill="#80a8a0"/><path d="M37 41V78" stroke="#c09050" stroke-width="1.5"/><path d="M26 75L49 75L49 91L26 91Z" fill="#202028"/><path d="M30 95H45V110H30Z" fill="#f0c060"/></g></svg>
<svg class="a" style="left:237px;top:512px" width="84" height="110" viewBox="0 0 84 110"><defs><filter id="f34" x="-20%" y="-20%" width="140%" height="140%"><feGaussianBlur stdDeviation="1.4"/></filter></defs><g filter="url(#f34)"><rect x="-5" y="-5" width="94" height="120" fill="#d0e2f0"/><rect x="-5" y="60" width="94" height="55" fill="#bcd6ec"/><rect x="-5" y="-5" width="94" height="27" fill="#5a4a40"/><path d="M40 -5H89V22H40Z" fill="#5a6a38"/><path d="M5 19C10 30 20 40 30 40C40 38 48 30 50 19Z" fill="#6a7a70" opacity=".4"/><path d="M49 4L89 4L89 32L63.6 61L42.4 64.7L40.7 46.7Z" fill="#4a5038"/><path d="M60 10L80 8L70 40L55 50Z" fill="#6a8040" opacity=".7"/><path d="M40.7 74.5L60 60" stroke="#3a3a40" stroke-width="2"/><ellipse cx="30" cy="81" rx="33" ry="12" transform="rotate(45 30 81)" fill="#3a3a40"/><ellipse cx="30" cy="81" rx="29" ry="8.5" transform="rotate(45 30 81)" fill="#a0d0c8"/><path d="M6 70L13 72L12 84L6 82Z" fill="#8a3838"/></g></svg>
<div class="tx" style="left:383px;top:510px;width:30px;height:32px"></div>
<div class="tx" style="left:351px;top:524px;width:31px;height:18px"></div>
<div class="a" style="left:334px;top:545px;width:39px;height:2px;background:#4a8ac0;opacity:.8"></div>
<div class="a" style="left:382px;top:544px;width:8px;height:2px;background:#333;opacity:.8"></div>
<svg class="a" style="left:335px;top:556px" width="79" height="67" viewBox="0 0 79 67"><defs><filter id="f35" x="-20%" y="-20%" width="140%" height="140%"><feGaussianBlur stdDeviation="1.0"/></filter></defs><g filter="url(#f35)"><defs><linearGradient id="g35" x1="0" y1="0" x2="1" y2="1"><stop offset="0" stop-color="#2a1810"/><stop offset=".5" stop-color="#6a4428"/><stop offset="1" stop-color="#b08058"/></linearGradient></defs><rect x="-5" y="-5" width="89" height="77" fill="url(#g35)"/><path d="M11 1L40 1L60 24L50 26ZM40 -2L60 -2L79 14L70 18Z" fill="#8a3020" opacity=".85"/><path d="M50 2L60 6L20 70L0 70Z" fill="#f0d8b0"/><path d="M0 50L20 45L15 70H0Z" fill="#e8c8a0"/><path d="M41 24L62 30L58 47L44 44Z" fill="#3a2818"/><path d="M41 40H79V67H41Z" fill="#a88058" opacity=".8"/><path d="M55 45L75 42L70 55Z" fill="#4a3020"/></g></svg>
<div class="tx" style="left:478px;top:446px;width:30px;height:32px"></div>
<div class="tx" style="left:509px;top:446px;width:30px;height:30px"></div>
<div class="a" style="left:542px;top:441px;width:15px;height:2px;background:#4a8ac0;opacity:.8"></div>
<div class="a" style="left:499px;top:441px;width:9px;height:2px;background:#333;opacity:.8"></div>
<div class="im" style="left:571px;top:364px;width:84px;height:113px"><div class="gr" style="left:-14.313333333333333px;top:-14.313333333333333px;right:-14.313333333333333px;bottom:-14.313333333333333px;grid-template-columns:repeat(4,1fr);grid-template-rows:repeat(6,1fr);filter:blur(7.2px)"><i style="background:#121412"></i><i style="background:#161816"></i><i style="background:#181a1a"></i><i style="background:#161818"></i><i style="background:#161a16"></i><i style="background:#1e2620"></i><i style="background:#222a24"></i><i style="background:#1a1e1e"></i><i style="background:#1e2a1a"></i><i style="background:#3a4a30"></i><i style="background:#3a4a30"></i><i style="background:#2a3428"></i><i style="background:#3a4a28"></i><i style="background:#4a5a30"></i><i style="background:#4a5a30"></i><i style="background:#3a4428"></i><i style="background:#6a6a28"></i><i style="background:#9a9438"></i><i style="background:#8a8a38"></i><i style="background:#5a5a20"></i><i style="background:#4a4818"></i><i style="background:#6a6420"></i><i style="background:#5a5820"></i><i style="background:#2a2a10"></i></div></div>
<svg class="a" style="left:571px;top:364px" width="84" height="113" viewBox="0 0 84 113"><path d="M8 92C20 86 50 84 76 90L72 96C50 92 30 94 10 96Z" fill="#1a1a10" opacity=".6"/>
<g fill="none" stroke="#c8c8c8" stroke-width="1.6"><circle cx="17.6" cy="77.5" r="12"/><circle cx="67.5" cy="80.8" r="10"/></g>
<path d="M25 46C35 44 42 48 46 56L46 78" stroke="#c8c8c8" stroke-width="3.2" fill="none"/><path d="M22 62C30 58 40 60 46 64" stroke="#d8d8d8" stroke-width="2.6" fill="none"/>
<path d="M44 55L62 50M30 64L41 77M12 87C30 92 44 90 62 82" stroke="#b02828" stroke-width="2.2" fill="none"/><path d="M62 50L70 46" stroke="#c0c0c0" stroke-width="1.6"/></svg>
<div class="im" style="left:661px;top:373px;width:168px;height:95px"><div class="gr" style="left:-14.44px;top:-14.44px;right:-14.44px;bottom:-14.44px;grid-template-columns:repeat(8,1fr);grid-template-rows:repeat(5,1fr);filter:blur(7.2px)"><i style="background:#e8dcb0"></i><i style="background:#e0d8b0"></i><i style="background:#c8c8b0"></i><i style="background:#90a0a8"></i><i style="background:#b8c8d0"></i><i style="background:#a8b8c8"></i><i style="background:#6a7078"></i><i style="background:#a0b8c8"></i><i style="background:#4a5050"></i><i style="background:#505858"></i><i style="background:#6a7880"></i><i style="background:#4a5058"></i><i style="background:#5a6068"></i><i style="background:#4a4a50"></i><i style="background:#5a5048"></i><i style="background:#6a6a70"></i><i style="background:#4a6078"></i><i style="background:#7a98b0"></i><i style="background:#4a6880"></i><i style="background:#3a5068"></i><i style="background:#2a3a50"></i><i style="background:#3a4a60"></i><i style="background:#5a5a60"></i><i style="background:#4a4848"></i><i style="background:#2a4058"></i><i style="background:#3a5878"></i><i style="background:#5a7898"></i><i style="background:#3a5070"></i><i style="background:#2a3a58"></i><i style="background:#3a4a60"></i><i style="background:#3a4050"></i><i style="background:#3a3838"></i><i style="background:#3a5068"></i><i style="background:#4a6888"></i><i style="background:#3a5878"></i><i style="background:#2a4060"></i><i style="background:#2a3a58"></i><i style="background:#2a3a50"></i><i style="background:#2a3848"></i><i style="background:#2a3848"></i></div></div>
<svg class="a" style="left:661px;top:373px" width="168" height="95" viewBox="0 0 168 95"><path d="M0 20H150V30H0Z" fill="#3a4242" opacity=".8"/><path d="M118 22L150 0M126 24L160 2M134 26L168 6" stroke="#4a4038" stroke-width="1"/>
<path d="M52 0H58V22H52ZM62 4H66V22H62ZM70 2H74V22H70Z" fill="#8898a8" opacity=".8"/>
<path d="M0 83L56 80L87 56L90 61L60 88L0 90Z" fill="#e8ecf0"/><path d="M37 84H47V89H37ZM51 84H56V88H51Z" fill="#d03050"/>
<path d="M48 50L86 57L85 60L47 52Z" fill="#d8dce0"/><path d="M86 0L92 0L99 30L94 32Z" fill="#e8e8e0"/>
<path d="M118 47L168 28V36L120 54Z" fill="#e8ecf0"/><path d="M150 38L160 34L162 38L152 42Z" fill="#d03050"/>
<circle cx="100" cy="46" r="15" fill="#1a2a40"/><circle cx="100" cy="46" r="8" fill="#40b0d8"/><circle cx="100" cy="46" r="3" fill="#a0e8f8"/>
<path d="M96 66L112 66L114 80L100 82Z" fill="#2a3a70"/><path d="M10 56L30 58L34 64L12 62Z" fill="#e0e8f0"/><circle cx="14" cy="56" r="4" fill="#3a5aa0"/></svg>
<div class="im" style="left:478px;top:511px;width:84px;height:112px"><div class="gr" style="left:-15.96px;top:-15.96px;right:-15.96px;bottom:-15.96px;grid-template-columns:repeat(4,1fr);grid-template-rows:repeat(5,1fr);filter:blur(8.0px)"><i style="background:#a8b090"></i><i style="background:#b8c0a0"></i><i style="background:#8a9070"></i><i style="background:#606850"></i><i style="background:#a0a888"></i><i style="background:#b0b898"></i><i style="background:#8a9070"></i><i style="background:#505840"></i><i style="background:#a8b090"></i><i style="background:#8a9078"></i><i style="background:#6a7058"></i><i style="background:#4a5040"></i><i style="background:#909878"></i><i style="background:#6a7058"></i><i style="background:#4a5040"></i><i style="background:#3a3a30"></i><i style="background:#3a3a28"></i><i style="background:#2a2a20"></i><i style="background:#2a2a20"></i><i style="background:#3a3a28"></i></div></div>
<svg class="a" style="left:478px;top:511px" width="84" height="112" viewBox="0 0 84 112"><path d="M51 12L55 20L40 78L30 84L26 70Z" fill="#2a4060"/><path d="M38 78L84 44L84 52L42 84Z" fill="#3a3a30"/>
<path d="M30 60L52 64L44 82L28 80Z" fill="#2a3a50"/><path d="M0 88C6 76 12 70 18 82M4 96C10 82 18 78 22 90M24 90L30 112" stroke="#202018" stroke-width="1.2" fill="none"/>
<circle cx="14" cy="92" r="3.5" fill="#f0a040" opacity=".9"/></svg>
<div class="a" style="left:616px;top:507px;width:2px;height:2px;background:#333"></div>
<div class="tx" style="left:622px;top:517px;width:32px;height:25px"></div>
<div class="tx" style="left:593px;top:524px;width:28px;height:18px"></div>
<div class="a" style="left:576px;top:545px;width:14px;height:2px;background:#4a8ac0;opacity:.8"></div>
<div class="a" style="left:624px;top:544px;width:8px;height:2px;background:#333;opacity:.8"></div>
<div class="im" style="left:592px;top:549px;width:63px;height:35px"><div class="gr" style="left:-4px;top:-4px;right:-4px;bottom:-4px;grid-template-columns:repeat(3,1fr);grid-template-rows:repeat(2,1fr);filter:blur(2.0px)"><i style="background:#3a4aa0"></i><i style="background:#4a5ab0"></i><i style="background:#2a3890"></i><i style="background:#3040a0"></i><i style="background:#4a5aa8"></i><i style="background:#3a50b0"></i></div></div>
<div class="im" style="left:592px;top:588px;width:63px;height:35px"><div class="gr" style="left:-4px;top:-4px;right:-4px;bottom:-4px;grid-template-columns:repeat(3,1fr);grid-template-rows:repeat(2,1fr);filter:blur(2.0px)"><i style="background:#4a6a98"></i><i style="background:#8aa0c0"></i><i style="background:#4a6a90"></i><i style="background:#3a5a88"></i><i style="background:#7a90b0"></i><i style="background:#3a5a80"></i></div></div>
<svg class="a" style="left:667px;top:511px" width="168" height="109" viewBox="0 0 168 109"><defs><filter id="bl3" x="-10%" y="-10%" width="120%" height="120%"><feGaussianBlur stdDeviation="1.2"/></filter></defs><g filter="url(#bl3)">
<rect width="168" height="109" fill="#c8a890"/>
<rect x="76" y="0" width="53" height="40" fill="#d8c8b8"/><path d="M80 8L100 34M90 4L110 30M100 2L118 28M110 0L126 26" stroke="#a85a30" stroke-width="4"/>
<rect x="129" y="0" width="39" height="40" fill="#2a3020"/><path d="M148 20H168V66H148Z" fill="#b84848"/>
<path d="M99 66H168V109H99Z" fill="#50a8f0"/><path d="M110 70L118 109M130 76L124 109M150 80L160 100M104 80C114 84 120 94 118 109" stroke="#2a4030" stroke-width="4" fill="none"/>
<path d="M140 66L168 80V94L150 100L136 84Z" fill="#c0b0a8"/>
<path d="M5 0H76V46H29V100H5Z" fill="#f0e0c8"/><path d="M40 0C60 10 70 30 76 46H55C50 30 45 16 30 8Z" fill="#f8ece0"/>
<rect x="5" y="22" width="23" height="72" fill="#3a6a80"/><rect x="5" y="22" width="23" height="18" fill="#c0a040"/><rect x="5" y="60" width="23" height="34" fill="#203a50"/>
<path d="M29 46H54V98H29Z" fill="#e8c0a0"/>
<path d="M55 46H99V69H55Z" fill="#80a088"/><path d="M55 60H103V69H55Z" fill="#e070a0"/><path d="M62 48H90V58H62Z" fill="#d0d8c0"/>
<path d="M42 109L60 90L107 79L107 88L70 100L62 109Z" fill="#d07838"/><path d="M5 98H50L40 109H5Z" fill="#b87848"/>
<rect x="0" y="0" width="5" height="109" fill="#8a2818"/></g></svg>
<div class="a" style="left:239px;top:687px;width:168px;height:13px;background:linear-gradient(90deg,#0a1020,#203050 40%,#101828 70%,#2a4060)"></div>
<div class="a" style="left:661px;top:687px;width:79px;height:13px;background:linear-gradient(90deg,#b0b0b0,#e0e0e0 30%,#909090 45%,#f0f0f0 60%,#a0a0a0 80%,#e0e0e0)"></div>
<div class="a" style="left:755px;top:687px;width:83px;height:13px;background:linear-gradient(90deg,#0a1a1a,#103030 60%,#1a4a4a)"></div>
</div><!--/canvas-->
  <!-- scrollbars -->
  <div class="a" style="left:891px;top:60px;width:7px;height:692px;background:#fff"></div>
  <div class="a" style="left:891px;top:60px;width:7px;height:484px;background:#e8e6e2"></div>
  <div class="a" style="left:0;top:752px;width:891px;height:7px;background:#e8e6e2"></div>
  <div class="a" style="left:891px;top:752px;width:7px;height:7px;background:#efefee"></div>
  <div class="a" style="left:0;top:759px;width:898px;height:1px;background:#cbcdc9"></div>
  <div class="a" style="left:891px;top:59px;width:327px;height:1px;background:#cbcdc9"></div>
  <div class="a" style="left:898px;top:0;width:1px;height:819px;background:#cbcdc9"></div>

  <!-- bottom bar -->
  <svg class="a" style="left:33px;top:781px" width="16" height="16" viewBox="0 0 16 16"><circle cx="8" cy="8" r="8" fill="#5a5a5a"/><path d="M5.6 6.2C5.6 4.6 6.6 3.8 8.1 3.8C9.6 3.8 10.5 4.6 10.5 5.9C10.5 7.4 8.9 7.6 8.9 9.2H7.2C7.2 7.2 8.6 7 8.6 6C8.6 5.5 8.4 5.2 8 5.2C7.6 5.2 7.4 5.6 7.4 6.2Z" fill="#fff"/><rect x="7.2" y="10.2" width="1.8" height="1.8" fill="#fff"/></svg>
  <svg class="a" style="left:55px;top:788px" width="7" height="4"><path d="M0 0H7L3.5 4Z" fill="#5a5a5a"/></svg>
  <div class="a" style="left:401px;top:788px;width:14px;height:2px;background:#4a4a4a"></div>
  <div class="a" style="left:428px;top:777px;width:42px;height:24px;background:#fff;border:1px solid #a9a69e"></div>
  <div class="a" style="left:438.7px;top:784px;font-size:11px;color:#333">14%</div>
  <div class="a" style="left:461px;top:782px;width:1px;height:13px;background:#222"></div>
  <div class="a" style="left:483px;top:788px;width:14px;height:2px;background:#4a4a4a"></div>
  <div class="a" style="left:489px;top:782px;width:2px;height:14px;background:#4a4a4a"></div>
  <svg class="a" style="left:843px;top:780px" width="18" height="18" viewBox="0 0 18 18"><g fill="#555"><rect x="7.8" y="1" width="2.4" height="16"/><rect x="1" y="7.8" width="16" height="2.4"/><rect x="7.8" y="1.5" width="2.4" height="15" transform="rotate(45 9 9)"/><rect x="7.8" y="1.5" width="2.4" height="15" transform="rotate(-45 9 9)"/></g><circle cx="9" cy="9" r="6" fill="#555"/><circle cx="9" cy="9" r="3.9" fill="#e8e6e2"/><circle cx="9" cy="9" r="1.8" fill="#555"/></svg>
  <svg class="a" style="left:867px;top:795px" width="9" height="5"><path d="M0 0H9L4.5 5Z" fill="#555"/></svg>

  <!-- right panel -->
  <div class="a" style="left:899px;top:0;width:106px;height:59px;background:#f1f0ec"></div>
  <div class="a" style="left:1005px;top:0;width:1px;height:59px;background:#cbcdc9"></div>
  <div class="a" style="left:1112px;top:0;width:1px;height:59px;background:#cbcdc9"></div>
  <div class="a" style="left:899px;top:60px;width:319px;height:759px;background:#fff"></div>
  <!-- tab icons -->
  <svg class="a" style="left:940px;top:15px" width="24" height="27" viewBox="0 0 24 27"><path d="M1 1H19.5L23 4.5V26H1Z" fill="none" stroke="#1563d0" stroke-width="2"/><path d="M18.5 0H20L24 4V6H18.5Z" fill="#1563d0"/><g fill="#1563d0"><rect x="4" y="4" width="7" height="9"/><rect x="13" y="4" width="7" height="9"/><rect x="4" y="14" width="7" height="9"/><rect x="13" y="14" width="7" height="9"/></g><g fill="#fff" font-family="Liberation Mono" font-size="7" font-weight="bold"><text x="5.3" y="11">1</text><text x="14.3" y="11">2</text><text x="5.3" y="21">3</text><text x="14.3" y="21">4</text></g></svg>
  <svg class="a" style="left:1047px;top:16px" width="23" height="27" viewBox="0 0 23 27"><path d="M5 1.5H19L21.5 4V21H5Z" fill="none" stroke="#555" stroke-width="2"/><path d="M18 0.5H20L22.5 3V5.5H18Z" fill="#555"/><path d="M1.5 1V20.5" stroke="#555" stroke-width="1" stroke-dasharray="1 1"/><path d="M1 21.5H5M5.5 21V26M21.5 21V26" stroke="#555" stroke-width="1"/><path d="M6 25.5H21" stroke="#555" stroke-width="1" stroke-dasharray="1 1"/><path d="M1 1.5H4" stroke="#555" stroke-width="1"/></svg>
  <svg class="a" style="left:1151px;top:14px" width="29" height="29" viewBox="0 0 29 29"><circle cx="14.5" cy="14.5" r="10.3" fill="none" stroke="#555" stroke-width="2.4"/><path d="M14.5 0V29M0 14.5H29" stroke="#555" stroke-width="2"/></svg>

  <!-- panel content placeholders -->
  <div class="hd" style="left:915px;top:72.5px">Layout</div>
  <div class="lbl" style="left:914px;top:115.7px">Horizontal gaps</div>
  <div class="inp" style="left:914px;top:138px;width:294px;height:22px"></div>
  <div class="a" style="left:917.5px;top:142.2px;font-size:12.5px;letter-spacing:1px;color:#a3a3a3">0.138 0.138</div>
  <div class="lbl" style="left:914px;top:175.2px">Vertical gaps</div>
  <div class="inp" style="left:914px;top:197px;width:294px;height:22px"></div>
  <div class="a" style="left:917.5px;top:201.6px;font-size:12.5px;letter-spacing:1px;color:#a3a3a3">2 0</div>
  <div class="lbl" style="left:914px;top:245.3px">Layout</div>
  <div class="inp" style="left:914px;top:265px;width:294px;height:22px"></div>
  <div class="a" style="left:1186px;top:265px;width:22px;height:22px;background:#a8a59f"></div>
  <svg class="a" style="left:1194px;top:275px" width="8" height="5"><path d="M0 0H8L4 4.5Z" fill="#fff"/></svg>
  <div class="a" style="left:919.5px;top:270px;font-size:11px;color:#444;letter-spacing:-0.3px">Booklet</div>
  <div class="hd" style="left:915px;top:320.2px">Booklet</div>
  <div class="lbl" style="left:914px;top:367px">Booklet type</div>
  <div class="inp" style="left:1018px;top:364px;width:190px;height:22px"></div>
  <div class="a" style="left:1186px;top:364px;width:22px;height:22px;background:#a8a59f"></div>
  <svg class="a" style="left:1194px;top:374px" width="8" height="5"><path d="M0 0H8L4 4.5Z" fill="#fff"/></svg>
  <div class="a" style="left:1023.5px;top:369px;font-size:11px;color:#444;letter-spacing:-0.3px">4upr2</div>
  <div class="cb" style="left:914px;top:401px"><svg width="16" height="16" style="position:absolute;left:0;top:0"><path d="M3.2 8.2L6.6 11.4L12.8 4.2" fill="none" stroke="#fff" stroke-width="2"/></svg></div>
  <div class="lbl" style="left:935.6px;top:401.2px">Right to left</div>
  <div class="hd" style="left:915px;top:459.5px">Perfect bound</div>
  <div class="cb" style="left:914px;top:503px"></div>
  <div class="lbl" style="left:935.3px;top:503.5px">Perfect bound</div>
  <div class="lbl" style="left:934.4px;top:537.4px">Sheets in group</div>
  <div class="dots" style="left:1043px;top:552px;width:109px"></div>
  <div class="sm" style="left:1156px;top:534px">1</div>
  <div class="cb" style="left:934px;top:571px;background:#d6d6d4"></div>
  <div class="lbl" style="left:955.4px;top:571.4px">Add extra pages</div>
  <div class="hd" style="left:914.6px;top:629.5px">Creep</div>
  <div class="cb" style="left:914px;top:673px"></div>
  <div class="lbl" style="left:935.6px;top:673.3px">Creep</div>
  <div class="lbl" style="left:934.4px;top:707.4px">Shift outside pages</div>
  <div class="dots" style="left:1066px;top:721.5px;width:86px"></div>
  <div class="sm" style="left:1156px;top:704px">0.0</div>
  <div class="lbl" style="left:934.4px;top:744.2px">Shift inside pages</div>
  <div class="dots" style="left:1056px;top:759px;width:96px"></div>
  <div class="sm" style="left:1156px;top:741px">0.0</div>
 </div>
</div>
</body></html>
